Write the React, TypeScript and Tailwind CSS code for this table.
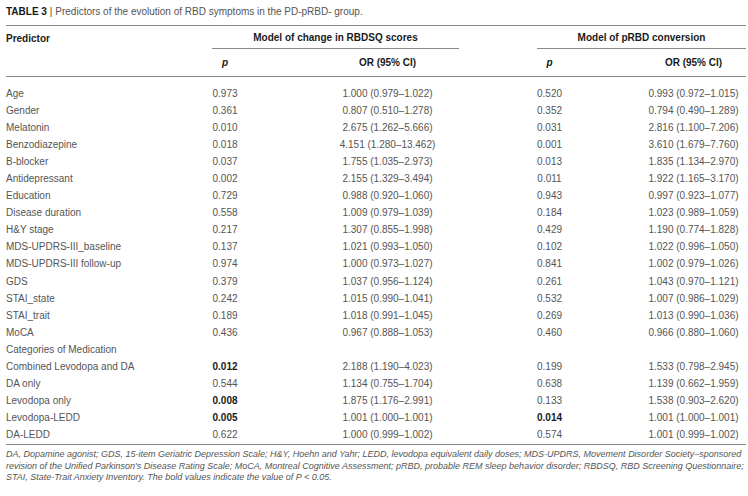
import React from "react";

type Row = {
  name: string;
  p1: string;
  or1: string;
  p2: string;
  or2: string;
  b1?: boolean;
  b2?: boolean;
};

const rows: Row[] = [
  { name: "Age", p1: "0.973", or1: "1.000 (0.979–1.022)", p2: "0.520", or2: "0.993 (0.972–1.015)" },
  { name: "Gender", p1: "0.361", or1: "0.807 (0.510–1.278)", p2: "0.352", or2: "0.794 (0.490–1.289)" },
  { name: "Melatonin", p1: "0.010", or1: "2.675 (1.262–5.666)", p2: "0.031", or2: "2.816 (1.100–7.206)" },
  { name: "Benzodiazepine", p1: "0.018", or1: "4.151 (1.280–13.462)", p2: "0.001", or2: "3.610 (1.679–7.760)" },
  { name: "B-blocker", p1: "0.037", or1: "1.755 (1.035–2.973)", p2: "0.013", or2: "1.835 (1.134–2.970)" },
  { name: "Antidepressant", p1: "0.002", or1: "2.155 (1.329–3.494)", p2: "0.011", or2: "1.922 (1.165–3.170)" },
  { name: "Education", p1: "0.729", or1: "0.988 (0.920–1.060)", p2: "0.943", or2: "0.997 (0.923–1.077)" },
  { name: "Disease duration", p1: "0.558", or1: "1.009 (0.979–1.039)", p2: "0.184", or2: "1.023 (0.989–1.059)" },
  { name: "H&Y stage", p1: "0.217", or1: "1.307 (0.855–1.998)", p2: "0.429", or2: "1.190 (0.774–1.828)" },
  { name: "MDS-UPDRS-III_baseline", p1: "0.137", or1: "1.021 (0.993–1.050)", p2: "0.102", or2: "1.022 (0.996–1.050)" },
  { name: "MDS-UPDRS-III follow-up", p1: "0.974", or1: "1.000 (0.973–1.027)", p2: "0.841", or2: "1.002 (0.979–1.026)" },
  { name: "GDS", p1: "0.379", or1: "1.037 (0.956–1.124)", p2: "0.261", or2: "1.043 (0.970–1.121)" },
  { name: "STAI_state", p1: "0.242", or1: "1.015 (0.990–1.041)", p2: "0.532", or2: "1.007 (0.986–1.029)" },
  { name: "STAI_trait", p1: "0.189", or1: "1.018 (0.991–1.045)", p2: "0.269", or2: "1.013 (0.990–1.036)" },
  { name: "MoCA", p1: "0.436", or1: "0.967 (0.888–1.053)", p2: "0.460", or2: "0.966 (0.880–1.060)" },
  { name: "Categories of Medication", p1: "", or1: "", p2: "", or2: "" },
  { name: "Combined Levodopa and DA", p1: "0.012", or1: "2.188 (1.190–4.023)", p2: "0.199", or2: "1.533 (0.798–2.945)", b1: true },
  { name: "DA only", p1: "0.544", or1: "1.134 (0.755–1.704)", p2: "0.638", or2: "1.139 (0.662–1.959)" },
  { name: "Levodopa only", p1: "0.008", or1: "1.875 (1.176–2.991)", p2: "0.133", or2: "1.538 (0.903–2.620)", b1: true },
  { name: "Levodopa-LEDD", p1: "0.005", or1: "1.001 (1.000–1.001)", p2: "0.014", or2: "1.001 (1.000–1.001)", b1: true, b2: true },
  { name: "DA-LEDD", p1: "0.622", or1: "1.000 (0.999–1.002)", p2: "0.574", or2: "1.001 (0.999–1.002)" },
];

export default function App() {
  return (
    <div
      className="w-[748px] h-[496px] bg-white text-[#555] overflow-hidden"
      style={{ fontFamily: '"Liberation Sans", Arial, sans-serif' }}
    >
      <div className="pl-[6px] pt-[6px] text-[10px] leading-[12px] text-[#555]">
        <span className="font-bold text-[#1a1a1a]">TABLE 3 </span>
        <span className="text-[#c08040] font-bold">|</span>
        <span> Predictors of the evolution of RBD symptoms in the PD-pRBD- group.</span>
      </div>

      <div className="ml-[6px] w-[740px] mt-[7px] border-t-[1.5px] border-[#8a8a8a]">
        {/* Header row 1 */}
        <div className="flex h-[23px] text-[10px] font-bold text-[#1a1a1a]">
          <div className="w-[206px] flex items-center pt-[1.5px]">Predictor</div>
          <div className="w-[247px] flex items-center justify-center pt-[1.5px] border-b border-[#8a8a8a]">
            Model of change in RBDSQ scores
          </div>
          <div className="w-[78px]" />
          <div className="w-[209px] flex items-center justify-center pt-[1.5px] border-b border-[#8a8a8a]">
            Model of pRBD conversion
          </div>
        </div>
        {/* Header row 2 */}
        <div className="flex h-[27.5px] items-center text-[10px] font-bold text-[#1a1a1a] border-b-[1.5px] border-[#8a8a8a]">
          <div className="w-[194px]" />
          <div className="w-[50px] text-center italic">p</div>
          <div className="w-[85px]" />
          <div className="w-[105px] text-center">OR (95% CI)</div>
          <div className="w-[84px]" />
          <div className="w-[51px] text-center italic">p</div>
          <div className="w-[68px]" />
          <div className="w-[101px] text-center">OR (95% CI)</div>
        </div>

        {/* Body */}
        <div className="pt-[8.5px] pb-[0.5px]">
          {rows.map((r) => (
            <div key={r.name} className="flex h-[17.1px] items-center text-[10px] leading-[12px]">
              <div className="w-[194px] whitespace-nowrap">{r.name}</div>
              <div className={`w-[50px] text-center ${r.b1 ? "font-bold text-[#1a1a1a]" : ""}`}>{r.p1}</div>
              <div className="w-[85px]" />
              <div className="w-[105px] text-center whitespace-nowrap">{r.or1}</div>
              <div className="w-[84px]" />
              <div className={`w-[51px] text-center ${r.b2 ? "font-bold text-[#1a1a1a]" : ""}`}>{r.p2}</div>
              <div className="w-[68px]" />
              <div className="w-[101px] text-center whitespace-nowrap">{r.or2}</div>
            </div>
          ))}
        </div>

        <div className="border-t-[1.5px] border-[#8a8a8a] pt-[3.5px] text-[9px] leading-[11.7px] italic text-[#555]">
          <div className="whitespace-nowrap">
            DA, Dopamine agonist; GDS, 15-item Geriatric Depression Scale; H&amp;Y, Hoehn and Yahr; LEDD, levodopa equivalent daily doses; MDS-UPDRS, Movement Disorder Society–sponsored
          </div>
          <div className="whitespace-nowrap">
            revision of the Unified Parkinson's Disease Rating Scale; MoCA, Montreal Cognitive Assessment; pRBD, probable REM sleep behavior disorder; RBDSQ, RBD Screening Questionnaire;
          </div>
          <div className="whitespace-nowrap">
            STAI, State-Trait Anxiety Inventory. The bold values indicate the value of P &lt; 0.05.
          </div>
        </div>
      </div>
    </div>
  );
}
